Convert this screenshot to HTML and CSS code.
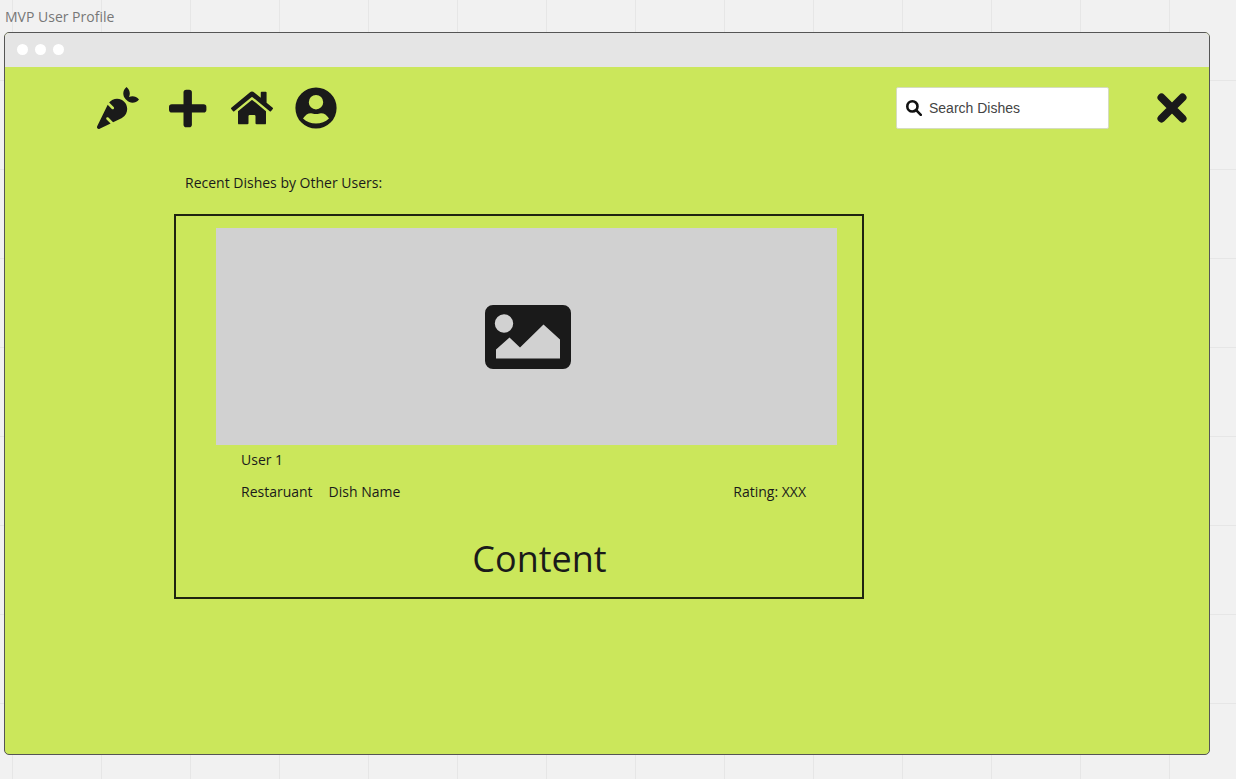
FILE: index.html
```html
<!DOCTYPE html>
<html lang="en">
<head>
<meta charset="utf-8">
<meta name="viewport" content="width=device-width, initial-scale=1">
<title>MVP User Profile</title>
<link rel="stylesheet" href="styles.css">
</head>
<body class="board">
  <h1 class="frame-title">MVP User Profile</h1>
  <div class="window">
    <div class="window-bar">
      <span class="dot"></span><span class="dot"></span><span class="dot"></span>
    </div>
    <header class="toolbar">
      <nav class="nav" aria-label="Main">
        <a class="nav-link nav-brand" href="#" aria-label="Dishes">
          <svg class="icon" viewBox="0 0 512 512" width="42" height="42"><path d="M298.2 156.6c-52.7-25.7-114.5-10.5-150.2 32.8l55.2 55.2c6.3 6.3 6.3 16.4 0 22.6-3.1 3.1-7.2 4.7-11.3 4.7s-8.2-1.6-11.3-4.7L130.4 217 2.3 479.7c-2.9 6-3.1 13.3 0 19.7 5.4 11.1 18.900 15.700 30 10.300l133.600-65.200-49.200-49.200c-6.300-6.200-6.300-16.400 0-22.600 6.300-6.200 16.400-6.200 22.600 0l57 57 102-49.800c24-11.700 44.500-31.300 57.100-57.100 30.100-61.700 4.500-136.100-57.200-166.200zm92.100-34.900C409.800 81 399.700 32.900 360 0c-50.300 41.700-52.500 107.500-7.900 151.900l8 8c44.400 44.600 110.300 42.400 151.900-7.900-32.900-39.700-81-49.800-121.700-30.300z"/></svg>
        </a>
        <a class="nav-link" href="#" aria-label="Add dish">
          <svg class="icon" viewBox="0 0 42 42" width="42" height="42"><rect x="16.500" y="2.800" width="8.400" height="37.400" rx="2.800"/><rect x="2" y="17.200" width="37.400" height="8.400" rx="2.800"/></svg>
        </a>
        <a class="nav-link" href="#" aria-label="Home">
          <svg class="icon" viewBox="0 -32 576 576" width="42" height="42"><path d="M280.37 148.26L96 300.11V464a16 16 0 0 0 16 16l112.06-.29a16 16 0 0 0 15.92-16V368a16 16 0 0 1 16-16h64a16 16 0 0 1 16 16v95.64a16 16 0 0 0 16 16.05L464 480a16 16 0 0 0 16-16V300L295.67 148.26a12.19 12.19 0 0 0-15.3 0zM571.6 251.47L488 182.56V44.05a12 12 0 0 0-12-12h-56a12 12 0 0 0-12 12v72.61L318.47 43a48 48 0 0 0-61 0L4.34 251.47a12 12 0 0 0-1.6 16.9l25.5 31A12 12 0 0 0 45.15 301l235.22-193.74a12.19 12.19 0 0 1 15.3 0L530.9 301a12 12 0 0 0 16.9-1.6l25.5-31a12 12 0 0 0-1.7-16.93z"/></svg>
        </a>
        <a class="nav-link" href="#" aria-label="Profile">
          <svg class="icon" viewBox="0 0 42 42" width="42" height="42"><path fill-rule="evenodd" d="M21 .4a20.6 20.6 0 1 1 0 41.2A20.6 20.6 0 0 1 21 .4zM21 8a7.2 7.2 0 1 0 0 14.4A7.2 7.2 0 0 0 21 8zM8 31.500C10.500 28 12.500 26.200 16 26.200c2 0 2.500.8 5 .8s3-.8 5-.8c3.500 0 5.500 1.800 8 5.300C30.500 35 26 36.600 21 36.600S11.500 35 8 31.500z"/></svg>
        </a>
      </nav>
      <label class="search">
        <svg class="search-icon" viewBox="0 0 16 16" width="16" height="16" aria-hidden="true"><circle cx="6.400" cy="6.400" r="5.100"/><path d="M10.200 10.200l4.600 4.600"/></svg>
        <input class="search-input" type="search" placeholder="Search Dishes" aria-label="Search Dishes">
      </label>
      <button class="close" type="button" aria-label="Close">
        <svg class="icon" viewBox="0 0 32 32" width="32" height="32"><path class="cross" d="M5.500 5.500l21 21M26.500 5.500l-21 21"/></svg>
      </button>
    </header>
    <main class="feed">
      <h2 class="feed-title">Recent Dishes by Other Users:</h2>
      <article class="card">
        <div class="photo">
          <svg class="icon" viewBox="0 0 86 64" width="86" height="64" role="img" aria-label="Dish photo"><path fill-rule="evenodd" d="M8 0h70a8 8 0 0 1 8 8v48a8 8 0 0 1-8 8H8a8 8 0 0 1-8-8V8a8 8 0 0 1 8-8zM19 9.300a9.200 9.200 0 1 0 0 18.400a9.200 9.200 0 0 0 0-18.400zM11 53.500V44.500L24.500 32.500L35 42.500L58.500 19.500L75 34.500V53.500z"/></svg>
        </div>
        <div class="details">
          <p class="line">User 1</p>
          <div class="meta">
            <span>Restaruant</span>
            <span>Dish Name</span>
            <span class="rating">Rating: XXX</span>
          </div>
        </div>
        <p class="content">Content</p>
      </article>
    </main>
  </div>
</body>
</html>
```
FILE: styles.css
```css
* {
  box-sizing: border-box;
}

.board {
  display: flex;
  flex-direction: column;
  min-height: 100vh;
  margin: 0;
  padding: 0 26px 24px 4px;
  background-color: #f1f1f1;
  background-image:
    linear-gradient(90deg, #e6e6e6 1px, transparent 1px),
    linear-gradient(#e6e6e6 1px, transparent 1px);
  background-size: 89px 89px;
  background-position: 12px 80px;
  color: #1a1a1a;
  font: 400 14px/20px "Open Sans", sans-serif;
}

.frame-title {
  margin: 0;
  padding: 7px 1px 5px;
  color: #777;
  font-size: 14px;
  font-weight: 400;
  line-height: 20px;
}

.window {
  flex: 1;
  display: flex;
  flex-direction: column;
  overflow: hidden;
  border: 1px solid #555;
  border-radius: 5px;
  background: #cbe75b;
}

.window-bar {
  display: flex;
  align-items: center;
  gap: 7px;
  height: 34px;
  padding: 0 12px 1px;
  background: #e5e5e5;
}

.dot {
  width: 11px;
  height: 11px;
  border-radius: 50%;
  background: #fff;
}

.toolbar {
  display: flex;
  align-items: center;
  padding: 20px 21px 0 92px;
}

.nav {
  display: flex;
  gap: 22px;
  margin-right: auto;
}

.nav-brand {
  margin-right: 6px;
}

.nav-link,
.icon {
  display: block;
}

.icon {
  fill: #1a1a1a;
}

.search {
  display: flex;
  align-items: center;
  gap: 7px;
  width: 213px;
  height: 42px;
  margin-right: 47px;
  padding: 0 9px;
  border: 1px solid #d5dcc0;
  border-radius: 2px;
  background: #fff;
}

.search-icon {
  flex: none;
  fill: none;
  stroke: #111;
  stroke-width: 2.6;
  stroke-linecap: round;
}

.search-input {
  flex: 1;
  min-width: 0;
  padding: 0;
  border: 0;
  outline: 0;
  background: none;
  color: #444;
  font: 14px/20px "Liberation Sans", Arial, sans-serif;
}

.search-input::placeholder {
  color: #444;
  opacity: 1;
}

.close {
  padding: 0;
  border: 0;
  background: none;
  cursor: pointer;
}

.cross {
  fill: none;
  stroke: #1a1a1a;
  stroke-width: 8;
  stroke-linecap: round;
}

.feed {
  padding: 44px 345px 0 169px;
}

.feed-title {
  margin: 0 0 21px;
  padding-left: 11px;
  font-size: 14px;
  font-weight: 400;
  line-height: 20px;
}

.card {
  border: 2px solid #1f2410;
  padding: 12px 25px 14px 40px;
}

.photo {
  display: grid;
  place-items: center;
  height: 217px;
  padding-left: 2px;
  background: #d1d1d1;
}

.details {
  padding: 5px 31px 0 25px;
}

.line {
  margin: 0 0 12px;
}

.meta {
  display: flex;
  gap: 16px;
}

.rating {
  margin-left: auto;
}

.content {
  margin: 33px 0 0;
  padding-left: 26px;
  font-size: 36px;
  line-height: 48px;
  text-align: center;
}
```
